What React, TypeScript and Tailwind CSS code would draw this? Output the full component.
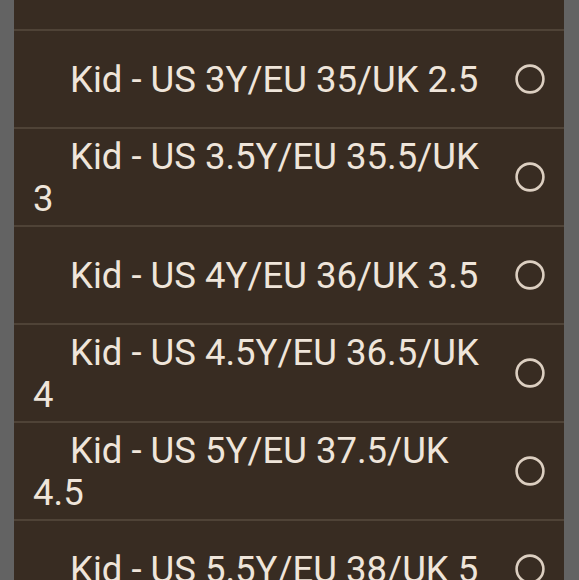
import React from 'react';

const sizes = [
  'Kid - US 3Y/EU 35/UK 2.5',
  'Kid - US 3.5Y/EU 35.5/UK 3',
  'Kid - US 4Y/EU 36/UK 3.5',
  'Kid - US 4.5Y/EU 36.5/UK 4',
  'Kid - US 5Y/EU 37.5/UK 4.5',
  'Kid - US 5.5Y/EU 38/UK 5',
];

const Radio: React.FC = () => (
  <svg width="30" height="30" viewBox="0 0 30 30" className="shrink-0">
    <circle cx="15" cy="15" r="13.4" fill="none" stroke="#dccfc1" strokeWidth="2.6" />
  </svg>
);

const App: React.FC = () => {
  return (
    <div className="h-[580px] w-[579px] overflow-hidden bg-[#636363] pl-[14px] pr-[15px]" style={{ fontFamily: 'Roboto, "Liberation Sans", sans-serif' }}>
      <div className="h-full bg-[#382c22]">
        <div className="h-[31px] border-b-2 border-[#4f4337]" />
        {sizes.map((label) => (
          <div key={label} className="box-content flex h-[96px] items-center border-b-2 border-[#4f4337] pl-[19px] pr-[19px]">
            <div className="flex-1 pt-[2px] indent-[37px] text-[36.5px] leading-[42px] text-[#efe5da]">{label}</div>
            <div className="ml-[20px] flex items-center">
              <Radio />
            </div>
          </div>
        ))}
      </div>
    </div>
  );
};

export default App;
